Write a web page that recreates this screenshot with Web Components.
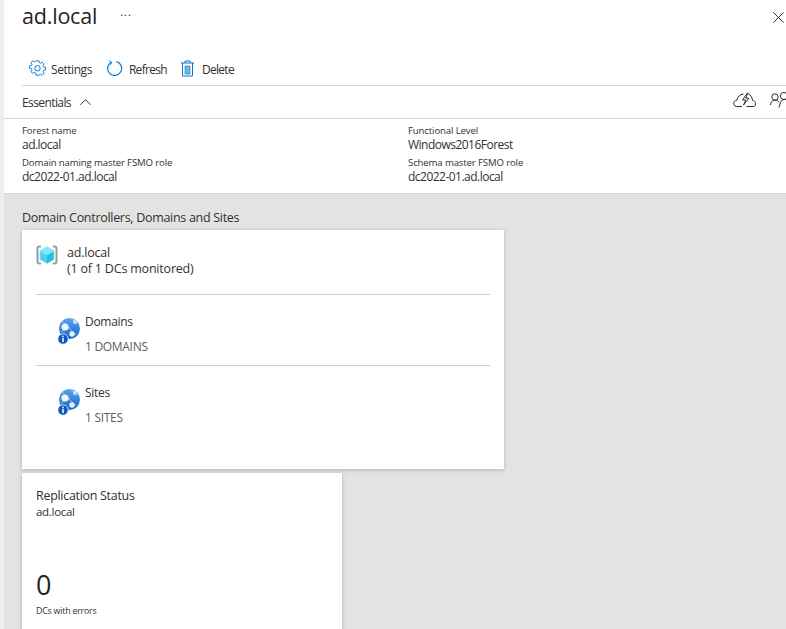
<!DOCTYPE html>
<html>
<head>
<meta charset="utf-8">
<title>ad.local</title>
<style>
  html, body { margin: 0; height: 100%; overflow: hidden; }
  body { font-family: "Open Sans", "Noto Sans", sans-serif; color: #323130; background: #eeeeee; }
  #page { display: block; height: 629px; margin-left: 4px; background: #e3e3e3; }
</style>
</head>
<body>
<blade-page id="page">
  <blade-header title="ad.local" slot="top"></blade-header>
  <essentials-panel slot="top"></essentials-panel>
  <section-title>Domain Controllers, Domains and Sites</section-title>
  <topology-card></topology-card>
  <replication-card></replication-card>
</blade-page>

<script>
const ICONS = {
  gear: `<svg width="17" height="17" viewBox="0 0 17 17" fill="none" stroke="#0078d4" stroke-width="1"><path d="M7 1h3l.4 2.100 1.300.6 1.800-1.200 2 2-1.200 1.800.6 1.300 2.100.4v3l-2.100.4-.6 1.300 1.200 1.800-2 2-1.800-1.200-1.300.6L10 16.500H7l-.4-2.600-1.300-.6-1.800 1.200-2-2 1.200-1.800-.6-1.300L0 9V6.500l2.100-.4.6-1.300L1.500 3l2-2 1.800 1.200 1.300-.6z" transform="translate(.5 -.2) scale(.94)" stroke-linejoin="round"/><circle cx="8.500" cy="8.300" r="2.700"/></svg>`,
  refresh: `<svg width="17" height="17" viewBox="0 0 17 17" fill="none" stroke="#0078d4" stroke-width="1.200"><path d="M5.300 2.300A7 7 0 1 0 10.500 1.700"/><path d="M3.300 1l2.300 1.300-1 2.300" stroke-width="1"/></svg>`,
  trash: `<svg width="13" height="17" viewBox="0 0 13 17" fill="none" stroke="#0078d4" stroke-width="1"><path d="M0 3h13M4 3V1h5v2M1.500 3v13h10V3"/><path d="M4 6h5v8H4z" fill="#0078d4" fill-opacity=".55" stroke-width=".6"/></svg>`,
  close: `<svg width="11" height="11" viewBox="0 0 11 11" stroke="#323130" stroke-width="1" fill="none"><path d="M.4.400l10.200 10.200M10.600.400L.4 10.600"/></svg>`,
  chevron: `<svg width="11" height="6" viewBox="0 0 11 6" stroke="#323130" stroke-width="1" fill="none"><path d="M.4 5.800L5.500.7l5.100 5.100"/></svg>`,
  cloud: `<svg width="23" height="15" viewBox="0 0 23 15" fill="none" stroke="#323130" stroke-width="1"><path d="M9 14.500H3.500C1 14.500.2 11.500 1 10c.7-1.300 1.900-1.800 3-1.800C4.500 5 6.800 2.300 10.500 2"/><path d="M13.500 14.500H20c2.300 0 3-2.300 2.400-3.900-.5-1.300-1.500-2-2.800-2.100C19 5 17.500 2.500 15 1.500"/><path d="M14.500.8L9.500 8h3.300l-2.300 5 5.500-6.800h-3.300l2-5"/></svg>`,
  people: `<svg width="16" height="16" viewBox="0 0 16 16" fill="none" stroke="#323130" stroke-width="1"><circle cx="5" cy="5" r="3.200"/><path d="M.5 13c0-3 2-4.800 4.500-4.800s3.500 1 4 2.300"/><circle cx="14" cy="4" r="3.600"/><path d="M9 15.500l1.500-5c.8-2 2-3 4-3h1.500"/></svg>`,
  forest: `<svg width="22" height="20" viewBox="0 0 22 20" fill="none"><path d="M5 1.500H3.500q-2 0-2 2v13q0 2 2 2H5M17 1.500h1.500q2 0 2 2v13q0 2-2 2H17" stroke="#9a9b9c" stroke-width="2"/><path d="M11 1.500l7.300 4.200v8.600L11 18.500l-7.300-4.200V5.700z" fill="#5cd9f6"/><path d="M11 1.500l7.300 4.200L11 10 3.700 5.700z" fill="#83e6fb"/><path d="M5 7l6 3.400v8l-6-3.500z" fill="#4fcff0"/><path d="M11 10.400l6.500-3.700v7.800L11 18.400z" fill="#2fb9e2"/></svg>`,
  globe: `<svg width="24" height="27" viewBox="0 0 24 27"><defs><linearGradient id="g" x1="0" y1="0" x2="0" y2="1"><stop offset="0" stop-color="#5aa2ee"/><stop offset="1" stop-color="#1268c8"/></linearGradient></defs><circle cx="11.500" cy="10.500" r="10.500" fill="url(#g)"/><path d="M4 3l14 14M12 0l8 6M3 14l9-5" stroke="#a9cdf0" stroke-width=".8" fill="none"/><circle cx="7" cy="9" r="3.600" fill="#eef5fc"/><circle cx="17" cy="4" r="2" fill="#cfe2f6"/><circle cx="14" cy="16" r="2.700" fill="#e4effa"/><circle cx="5" cy="21" r="5.200" fill="#0b5cc0" stroke="#fff" stroke-width=".7"/><rect x="4.300" y="20" width="1.500" height="4" fill="#fff"/><rect x="4.300" y="17.700" width="1.500" height="1.500" fill="#fff"/></svg>`
};

// every element here is just css + markup in an open shadow root
const define = (name, css, html) => {
  customElements.define(name, class extends HTMLElement {
    constructor() {
      super();
      this.attachShadow({ mode: 'open' });
    }
    connectedCallback() {
      const body = typeof html === 'function' ? html(this) : html;
      this.shadowRoot.innerHTML = `<style>${css}</style>${body}`;
    }
  });
};

define('blade-page', `
  :host { display: flex; flex-direction: column; }
  .top { background: #fff; padding-left: 18px; border-bottom: 1px solid #d6d6d6; }
  .rest { padding: 0 0 0 18px; }
`, `<div class="top"><slot name="top"></slot></div><div class="rest"><slot></slot></div>`);

define('blade-header', `
  :host { display: block; }
  .head { display: flex; align-items: flex-start; height: 48px; }
  h1 { margin: 1px 0 0; font-size: 21.500px; font-weight: 400; line-height: 30px; letter-spacing: -.2px; color: #252423; }
  .more { margin: 4px 0 0 23px; font-size: 11px; line-height: 16px; letter-spacing: 1px; color: #252423; }
  .close { margin: 12px 2px 0 auto; height: 11px; }
  .bar { display: flex; align-items: center; height: 38px; box-sizing: border-box; padding: 6px 0 0 7px; gap: 14px; border-bottom: 1px solid #d6d6d6; }
  .btn { display: flex; align-items: center; gap: 6px; font-size: 12px; letter-spacing: -.7px; }
  .btn:first-child { gap: 5px; letter-spacing: -.45px; }
  .btn svg { margin-top: -2px; }
  .del { gap: 8px; }
  svg { display: block; }
`, el => `
  <div class="head"><h1>${el.getAttribute('title')}</h1><span class="more">...</span><span class="close">${ICONS.close}</span></div>
  <div class="bar">
    <span class="btn">${ICONS.gear}Settings</span>
    <span class="btn">${ICONS.refresh}Refresh</span>
    <span class="btn del">${ICONS.trash}Delete</span>
  </div>`);

define('essentials-panel', `
  :host { display: block; }
  .head { display: flex; align-items: center; height: 32px; margin-left: -18px; padding-left: 18px; border-bottom: 1px solid #d6d6d6; font-size: 12px; letter-spacing: -.6px; gap: 9px; }
  .icons { margin-left: auto; display: flex; gap: 14px; overflow: hidden; height: 16px; margin-top: -4px; }
  svg { display: block; }
  .grid { display: grid; grid-template-columns: 386px 1fr; padding: 5px 0; }
  .item { height: 32px; }
  .label { font-size: 9.600px; line-height: 13px; letter-spacing: -.13px; }
  .value { font-size: 12px; line-height: 15px; letter-spacing: -.52px; }
`, `
  <div class="head">Essentials ${ICONS.chevron}<span class="icons">${ICONS.cloud}${ICONS.people}</span></div>
  <div class="grid">
    <div class="item"><div class="label">Forest name</div><div class="value">ad.local</div></div>
    <div class="item"><div class="label">Functional Level</div><div class="value">Windows2016Forest</div></div>
    <div class="item"><div class="label">Domain naming master FSMO role</div><div class="value">dc2022-01.ad.local</div></div>
    <div class="item"><div class="label">Schema master FSMO role</div><div class="value">dc2022-01.ad.local</div></div>
  </div>`);

define('section-title', `
  :host { display: block; font-size: 12.500px; line-height: 16px; padding: 16px 0 4px; letter-spacing: -.3px; }
`, `<slot></slot>`);

define('topology-row', `
  :host { display: flex; height: 70px; border-top: 1px solid #cfcfcf; padding-left: 22px; }
  .ic { margin-top: 23px; width: 27px; }
  .txt { font-size: 12px; letter-spacing: -.3px; }
  .name { margin-top: 19px; line-height: 16px; }
  .count { margin-top: 9px; line-height: 16px; color: #605e5c; }
  svg { display: block; }
`, el => `
  <div class="ic">${ICONS.globe}</div>
  <div class="txt"><div class="name">${el.getAttribute('name')}</div><div class="count">${el.getAttribute('count')}</div></div>`);

define('topology-card', `
  :host { display: block; width: 482px; height: 239px; background: #fff; box-sizing: border-box; padding: 0 14px; box-shadow: 0 1px 4px rgba(0,0,0,.22); }
  .top { display: flex; height: 64px; box-sizing: border-box; padding-top: 15px; font-size: 12.500px; line-height: 16px; letter-spacing: -.2px; }
  .ic { width: 31px; }
  svg { display: block; }
`, `
  <div class="top"><div class="ic">${ICONS.forest}</div><div>ad.local<br>(1 of 1 DCs monitored)</div></div>
  <topology-row name="Domains" count="1 DOMAINS"></topology-row>
  <topology-row name="Sites" count="1 SITES"></topology-row>`);

define('replication-card', `
  :host { display: block; width: 320px; height: 170px; margin-top: 4px; background: #fff; box-sizing: border-box; padding: 15px 14px; box-shadow: 0 1px 4px rgba(0,0,0,.22); }
  .t { font-size: 12.500px; line-height: 16px; letter-spacing: -.3px; }
  .s { font-size: 11.500px; line-height: 16px; letter-spacing: -.3px; }
  .n { font-size: 27px; line-height: 34px; margin-top: 48px; color: #252423; }
  .c { font-size: 8.800px; line-height: 12px; margin-top: 3px; letter-spacing: -.2px; }
`, `
  <div class="t">Replication Status</div>
  <div class="s">ad.local</div>
  <div class="n">0</div>
  <div class="c">DCs with errors</div>`);
</script>
</body>
</html>
